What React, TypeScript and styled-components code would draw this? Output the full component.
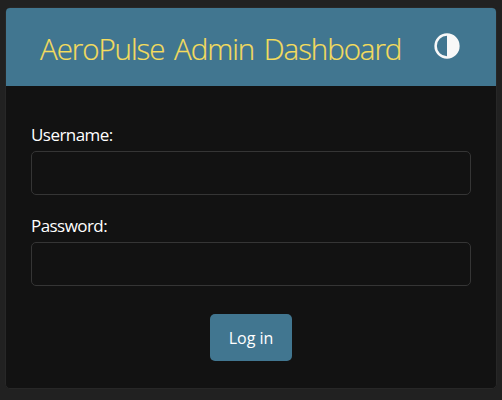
import React from "react";
import styled, { createGlobalStyle } from "styled-components";

const GlobalStyle = createGlobalStyle`
  *, *::before, *::after { box-sizing: border-box; }
  body {
    margin: 0;
    background: #212121;
    font-family: "Segoe UI", "Open Sans", "Noto Sans", sans-serif;
    color: #eee;
    overflow: hidden;
  }
`;

const Page = styled.main`
  width: 502px;
  height: 400px;
  padding: 7px 5px 0;
`;

const Card = styled.section`
  width: 492px;
  height: 382px;
  border: 1px solid #272727;
  border-radius: 5px;
  background: #121212;
  overflow: hidden;
`;

const Header = styled.header`
  display: flex;
  align-items: center;
  justify-content: space-between;
  height: 78px;
  padding: 0 36px 0 34px;
  background: #417690;
`;

const Title = styled.h1`
  margin: 0;
  padding-top: 3px;
  font-size: 29.5px;
  line-height: 36px;
  font-weight: 300;
  letter-spacing: -1.08px;
  word-spacing: 3.2px;
  color: #f5dd5d;
  -webkit-text-stroke: 0.2px #f5dd5d;
  white-space: nowrap;
`;

const ThemeToggle = styled.button`
  display: flex;
  margin: 0 0 2px;
  padding: 0;
  border: 0;
  background: transparent;
  color: #f8f8f8;
`;

const Form = styled.form`
  display: flex;
  flex-direction: column;
  align-items: center;
  padding: 36px 25px 0;
`;

const Field = styled.div<{ $gap: number }>`
  width: 100%;
  margin-bottom: ${(p) => p.$gap}px;
`;

const Label = styled.label`
  display: block;
  height: 29px;
  font-size: 17px;
  line-height: 26px;
  letter-spacing: -0.55px;
  color: #fff;
`;

const Input = styled.input`
  display: block;
  width: 100%;
  height: 44px;
  padding: 10px;
  border: 1px solid #353535;
  border-radius: 5px;
  outline: none;
  background: #121212;
  color: #eee;
  font: inherit;
`;

const Submit = styled.button`
  width: 82px;
  height: 47px;
  padding: 0;
  border: 0;
  border-radius: 5px;
  background: #417690;
  color: #fff;
  font-family: inherit;
  font-size: 16px;
`;

export default function App() {
  return (
    <>
      <GlobalStyle />
      <Page>
        <Card>
          <Header>
            <Title>AeroPulse Admin Dashboard</Title>
            <ThemeToggle type="button" aria-label="Toggle theme">
              <svg width="26" height="26" viewBox="0 0 26 26">
                <circle cx="13" cy="13" r="11.4" fill="none" stroke="currentColor" strokeWidth="2.5" />
                <path d="M13 2a11 11 0 0 1 0 22z" fill="currentColor" />
              </svg>
            </ThemeToggle>
          </Header>
          <Form>
            <Field $gap={18}>
              <Label htmlFor="username">Username:</Label>
              <Input id="username" type="text" />
            </Field>
            <Field $gap={28}>
              <Label htmlFor="password">Password:</Label>
              <Input id="password" type="password" />
            </Field>
            <Submit type="button">Log in</Submit>
          </Form>
        </Card>
      </Page>
    </>
  );
}
